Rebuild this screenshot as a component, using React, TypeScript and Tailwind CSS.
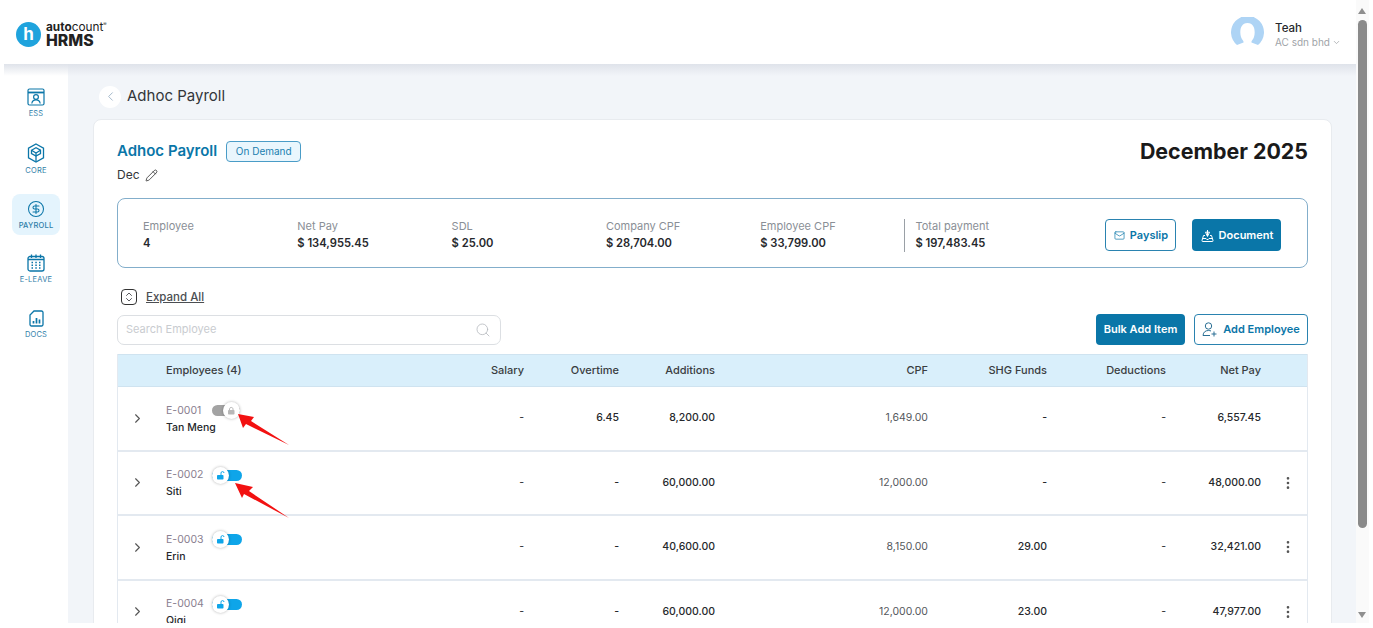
import { ChevronDown, ChevronLeft, ChevronRight, ChevronsUpDown, CircleDollarSign, EllipsisVertical, Mail, Pencil, Search } from "lucide-react";

const stats = [
  { label: "Employee", value: "4" },
  { label: "Net Pay", value: "$ 134,955.45" },
  { label: "SDL", value: "$ 25.00" },
  { label: "Company CPF", value: "$ 28,704.00" },
  { label: "Employee CPF", value: "$ 33,799.00" },
];

const rows = [
  { id: "E-0001", name: "Tan Meng", salary: "-", overtime: "6.45", additions: "8,200.00", cpf: "1,649.00", shg: "-", deductions: "-", net: "6,557.45", locked: true },
  { id: "E-0002", name: "Siti", salary: "-", overtime: "-", additions: "60,000.00", cpf: "12,000.00", shg: "-", deductions: "-", net: "48,000.00", locked: false },
  { id: "E-0003", name: "Erin", salary: "-", overtime: "-", additions: "40,600.00", cpf: "8,150.00", shg: "29.00", deductions: "-", net: "32,421.00", locked: false },
  { id: "E-0004", name: "Qiqi", salary: "-", overtime: "-", additions: "60,000.00", cpf: "12,000.00", shg: "23.00", deductions: "-", net: "47,977.00", locked: false },
];

const gridCols = "grid grid-cols-[48px_278px_80px_95px_96px_213px_119px_119px_95px_1fr] items-center";

const EssIcon = () => (
  <svg width="18" height="18" viewBox="0 0 18 18" fill="none" stroke="#0b76a8" strokeWidth="1.2">
    <rect x="1" y="1" width="16" height="16" rx="1.5" />
    <path d="M1 4.500h16" strokeWidth="1.800" />
    <circle cx="9" cy="9" r="2.400" />
    <path d="M4.800 15.500c.4-2.600 2-3.600 4.200-3.600s3.800 1 4.200 3.600" />
  </svg>
);

const CoreIcon = () => (
  <svg width="18" height="20" viewBox="0 0 18 20" fill="none" stroke="#0b76a8" strokeWidth="1.3">
    <path d="M9 1l7.500 4.200v9.600L9 19l-7.500-4.200V5.200z" />
    <path d="M4.500 7.200L9 4.800l4.500 2.400v3.400L9 13l-4.500-2.400z" />
    <path d="M4.500 7.200L9 10l4.500-2.800M9 10v8" />
  </svg>
);

const LeaveIcon = () => (
  <svg width="18" height="18" viewBox="0 0 18 18" fill="none" stroke="#0b76a8" strokeWidth="1.3">
    <rect x="1" y="2.500" width="16" height="14.500" rx="2" />
    <path d="M4.500 0.500v3.500M9 0.500v3.500M13.500 0.500v3.500M1 5.500h16" />
    <path d="M4.500 8.500h1.500M8.300 8.500h1.500M12 8.500h1.500M4.500 11.200h1.500M8.300 11.200h1.500M12 11.200h1.500M4.500 13.900h1.500M8.300 13.900h1.500M12 13.900h1.500" strokeWidth="1.500" />
  </svg>
);

const DocsIcon = () => (
  <svg width="15" height="17" viewBox="0 0 15 17" fill="none" stroke="#0b76a8" strokeWidth="1.3">
    <path d="M5 1h7.500a1.500 1.500 0 0 1 1.500 1.500v12a1.500 1.500 0 0 1-1.500 1.500h-10A1.500 1.500 0 0 1 1 14.500V5z" />
    <path d="M4.500 13.500v-2.500M7.500 13.500V8M10.500 13.500v-4" strokeWidth="1.700" />
  </svg>
);

const navItems = [
  { label: "ESS", icon: <EssIcon />, cls: "mt-[18px] h-[41px]" },
  { label: "CORE", icon: <CoreIcon />, cls: "mt-[15px] h-[41px]" },
  { label: "PAYROLL", icon: <CircleDollarSign size={18} strokeWidth={1.4} color="#0b76a8" />, cls: "mt-[15px] h-[41px] bg-[#e4f4fd] font-medium" },
  { label: "E-LEAVE", icon: <LeaveIcon />, cls: "mt-[13px] h-[41px]" },
  { label: "DOCS", icon: <DocsIcon />, cls: "mt-[15px] h-[41px]" },
];

const LockToggle = ({ locked }: { locked: boolean }) => (
  <div className={`relative ml-[10px] h-[11px] rounded-full ${locked ? "w-[28px] bg-[#a3a3a3]" : "w-[30px] bg-[#0ea5e9]"}`}>
    <div className={`absolute top-[-3px] flex h-[17px] w-[17px] items-center justify-center rounded-full bg-white shadow-[0_0_3px_rgba(0,0,0,0.3)] ${locked ? "right-0" : "left-0"}`}>
      <svg width="9" height="9" viewBox="0 0 9 9" fill="none">
        <rect x="1" y="4" width="6.500" height="4.500" rx="0.800" fill={locked ? "#b8b8b8" : "#0ea5e9"} />
        {locked ? (
          <path d="M2.500 4V2.800a1.800 1.800 0 0 1 3.500 0V4" stroke="#b8b8b8" strokeWidth="1" />
        ) : (
          <path d="M5 4V2.200a1.500 1.500 0 0 1 3-.2" stroke="#0ea5e9" strokeWidth="1" />
        )}
      </svg>
    </div>
  </div>
);

const App = () => {
  return (
    <div className="relative h-[628px] w-[1373px] overflow-hidden bg-white font-['Inter',sans-serif] text-[#26282c]">
      <div className="flex h-[623px] w-full">
        <div className="flex h-full w-[1356px] flex-col">
          <header className="flex h-[64px] shrink-0 items-center justify-between pl-[16px] pr-[15px]">
            <div className="mt-[5px] flex items-center gap-[5px]">
              <div className="flex h-[25px] w-[25px] items-center justify-center rounded-full bg-[#1fa3dd] text-[17px] font-bold leading-none text-white">h</div>
              <div className="flex flex-col">
                <div className="flex items-start text-[11.800px] leading-[12px] text-[#222]">
                  <span className="font-bold">auto</span>
                  <span>count</span>
                  <span className="text-[5px] leading-[6px]">®</span>
                </div>
                <div className="text-[15.800px] font-extrabold leading-[15px] text-[#222]">HRMS</div>
              </div>
            </div>
            <div className="flex items-center gap-[11px]">
              <svg width="33" height="30" viewBox="0 0 33 30" className="mb-[1px]">
                <path d="M6 28A16.500 16.500 0 1 1 27 28L20.500 25.500C20 24 22 23 23 20 24.500 15 24 6 16.500 6 9 6 8.500 15 10 20 11 23 13 24 12.500 25.500Z" fill="#aed4f5" />
              </svg>
              <div className="mt-[6px] flex flex-col">
                <span className="text-[11.500px] font-medium leading-[15px] text-[#26282c]">Teah</span>
                <span className="flex items-center gap-[2px] text-[10px] leading-[13px] text-[#a0a4a8]">AC sdn bhd <ChevronDown size={9} /></span>
              </div>
            </div>
          </header>

          <div className="relative ml-[4px] flex min-h-0 flex-1">
            <div className="absolute left-0 right-0 top-0 z-10 h-[12px] bg-gradient-to-b from-[#dfe3ea] to-transparent" />
            <nav className="flex w-[64px] shrink-0 flex-col items-center bg-white">
              {navItems.map((item) => (
                <div key={item.label} className={`flex w-[48px] flex-col items-center justify-center gap-[4px] rounded-[8px] text-[7.500px] leading-[8px] tracking-[0.2px] text-[#2f7ea8] ${item.cls}`}>
                  {item.icon}
                  <span>{item.label}</span>
                </div>
              ))}
            </nav>

            <main className="min-w-0 flex-1 overflow-hidden bg-[#f2f5f9] pl-[25px] pr-[24px]">
              <div className="flex h-[55px] items-center gap-[6px] pl-[6px] pt-[10px]">
                <div className="flex h-[22px] w-[22px] items-center justify-center rounded-full bg-white">
                  <ChevronLeft size={15} strokeWidth={1.5} color="#9fb4c7" />
                </div>
                <span className="text-[15px] text-[#33363a]">Adhoc Payroll</span>
              </div>

              <div className="rounded-t-[8px] border border-[#e8ebef] bg-white px-[23px] pt-[20px]">
                <div className="flex items-start justify-between">
                  <div>
                    <div className="flex items-center gap-[9px]">
                      <span className="text-[15px] font-semibold leading-[22px] text-[#0a76a8]">Adhoc Payroll</span>
                      <span className="flex h-[21px] w-[75px] items-center justify-center rounded-[4px] border border-[#4a9cc7] bg-[#e9f6fd] text-[10px] text-[#1a7fb0]">On Demand</span>
                    </div>
                    <div className="mt-[4px] flex items-center gap-[5px] text-[12px] leading-[18px] text-[#33363a]">
                      Dec <Pencil size={13} strokeWidth={1.4} color="#222" />
                    </div>
                  </div>
                  <span className="text-[21.400px] font-bold leading-[22px] text-[#1a1a1a]">December 2025</span>
                </div>

                <div className="mt-[14px] flex h-[70px] items-center rounded-[8px] border border-[#83aecb] pl-[25px] pt-[4px]">
                  {stats.map((s) => (
                    <div key={s.label} className="w-[154.300px] shrink-0">
                      <div className="text-[11px] leading-[15px] text-[#8a8f96]">{s.label}</div>
                      <div className="mt-[1px] text-[11.200px] font-semibold leading-[16px] text-[#26282c]">{s.value}</div>
                    </div>
                  ))}
                  <div className="ml-[-10px] flex h-[33px] w-[201px] shrink-0 flex-col justify-center border-l border-[#9aa0a6] pl-[10px]">
                    <div className="text-[11px] leading-[15px] text-[#8a8f96]">Total payment</div>
                    <div className="mt-[1px] text-[11.200px] font-semibold leading-[16px] text-[#26282c]">$ 197,483.45</div>
                  </div>
                  <button className="flex h-[32px] w-[71px] items-center justify-center gap-[5px] rounded-[4px] border border-[#2a83b0] text-[11px] font-semibold text-[#0a76a8]">
                    <Mail size={11} strokeWidth={1.5} /> Payslip
                  </button>
                  <button className="ml-[16px] flex h-[32px] w-[89px] items-center justify-center gap-[5px] rounded-[4px] bg-[#0a76a8] text-[11px] font-semibold text-white">
                    <svg width="13" height="13" viewBox="0 0 13 13" fill="none" stroke="white" strokeWidth="1">
                      <path d="M6.500 1v6M4.500 3.200h4L6.500 7.500z" />
                      <path d="M4 6.500H2.500L1 11.500a.8.8 0 0 0 .8 1h9.400a.8.8 0 0 0 .8-1l-1.500-5H9" />
                      <path d="M1.500 9.500h3.500l.8 1h1.400l.8-1h3.500" />
                    </svg>
                    Document
                  </button>
                </div>

                <div className="mt-[21px] flex items-center gap-[9px] pl-[4px]">
                  <div className="flex h-[16px] w-[16px] items-center justify-center rounded-[4px] border border-[#333]">
                    <ChevronsUpDown size={12} strokeWidth={1.5} />
                  </div>
                  <span className="text-[11.500px] font-medium leading-[16px] text-[#4b4e52] underline">Expand All</span>
                </div>

                <div className="mt-[9px] flex items-center justify-between">
                  <div className="flex h-[30px] w-[384px] items-center justify-between rounded-[7px] border border-[#dcdfe3] pl-[8px] pr-[9px] text-[11px] text-[#c9ccd0]">
                    <span>Search Employee</span>
                    <Search size={16} strokeWidth={1.2} color="#b4b8bc" />
                  </div>
                  <div className="flex items-center gap-[9px]">
                    <button className="flex h-[31px] w-[89px] items-center justify-center rounded-[4px] bg-[#0a76a8] text-[11px] font-semibold text-white">Bulk Add Item</button>
                    <button className="flex h-[31px] w-[114px] items-center justify-center gap-[5px] rounded-[4px] border border-[#2a83b0] text-[11px] font-semibold text-[#0a76a8]">
                      <svg width="16" height="15" viewBox="0 0 16 15" fill="none" stroke="#2a6f94" strokeWidth="1">
                        <circle cx="6.500" cy="4" r="3.200" />
                        <path d="M1 13.500c.3-3.500 2.500-5 5.500-5 1 0 1.800.2 2.500.5M1 13.500h7M12 9.500v5M9.500 12h5" />
                      </svg>
                      Add Employee
                    </button>
                  </div>
                </div>

                <div className="mt-[9px] border-x border-[#e3e9f0]">
                  <div className={`${gridCols} h-[33px] border-y border-[#cfe3f0] bg-[#d9effb] text-[11px] font-medium text-[#3a3d41]`}>
                    <span />
                    <span>Employees (4)</span>
                    <span className="text-right">Salary</span>
                    <span className="text-right">Overtime</span>
                    <span className="text-right">Additions</span>
                    <span className="text-right">CPF</span>
                    <span className="text-right">SHG Funds</span>
                    <span className="text-right">Deductions</span>
                    <span className="text-right">Net Pay</span>
                  </div>
                  {rows.map((r) => (
                    <div key={r.id} className={`${gridCols} h-[64.500px] border-b-2 border-[#e3e9f0] text-[10.500px] text-[#26282c]`}>
                      <ChevronRight size={15} strokeWidth={1.8} color="#555" className="ml-[12px]" />
                      <div className="flex flex-col pt-[2px]">
                        <div className="flex items-center">
                          <span className="w-[36px] whitespace-nowrap text-[10.500px] leading-[14px] text-[#8a8090]">{r.id}</span>
                          <LockToggle locked={r.locked} />
                        </div>
                        <span className="mt-[3px] text-[10.500px] font-medium leading-[14px] text-[#26282c]">{r.name}</span>
                      </div>
                      <span className="text-right">{r.salary}</span>
                      <span className="text-right font-medium">{r.overtime}</span>
                      <span className="text-right font-medium">{r.additions}</span>
                      <span className="text-right text-[#55585c]">{r.cpf}</span>
                      <span className="text-right font-medium">{r.shg}</span>
                      <span className="text-right">{r.deductions}</span>
                      <span className="text-right font-medium">{r.net}</span>
                      {r.locked ? <span /> : <EllipsisVertical size={16} strokeWidth={2} color="#555" className="ml-[19px]" />}
                    </div>
                  ))}
                </div>
              </div>
            </main>
          </div>
        </div>

        <div className="relative h-full w-[13px] shrink-0 bg-[#fafafa]">
          <div className="absolute left-[2px] top-[8px] h-0 w-0 border-x-[4.500px] border-b-[6px] border-x-transparent border-b-[#8f8f8f]" />
          <div className="absolute left-[2px] top-[20px] h-[508px] w-[9px] rounded-full bg-[#8a8a8a]" />
          <div className="absolute bottom-[5px] left-[2px] h-0 w-0 border-x-[4.500px] border-t-[6px] border-x-transparent border-t-[#8f8f8f]" />
        </div>
      </div>

      {/* annotation arrows drawn on top of the screenshot */}
      <svg className="pointer-events-none absolute left-0 top-0 z-20" width="1373" height="628">
        <polygon points="238,414 254,417 251,421 289,445 246,424 243,428" fill="#f21111" />
        <polygon points="235,483 253,487 249,491 289,518 244,494 242,498" fill="#f21111" />
      </svg>
    </div>
  );
};

export default App;
